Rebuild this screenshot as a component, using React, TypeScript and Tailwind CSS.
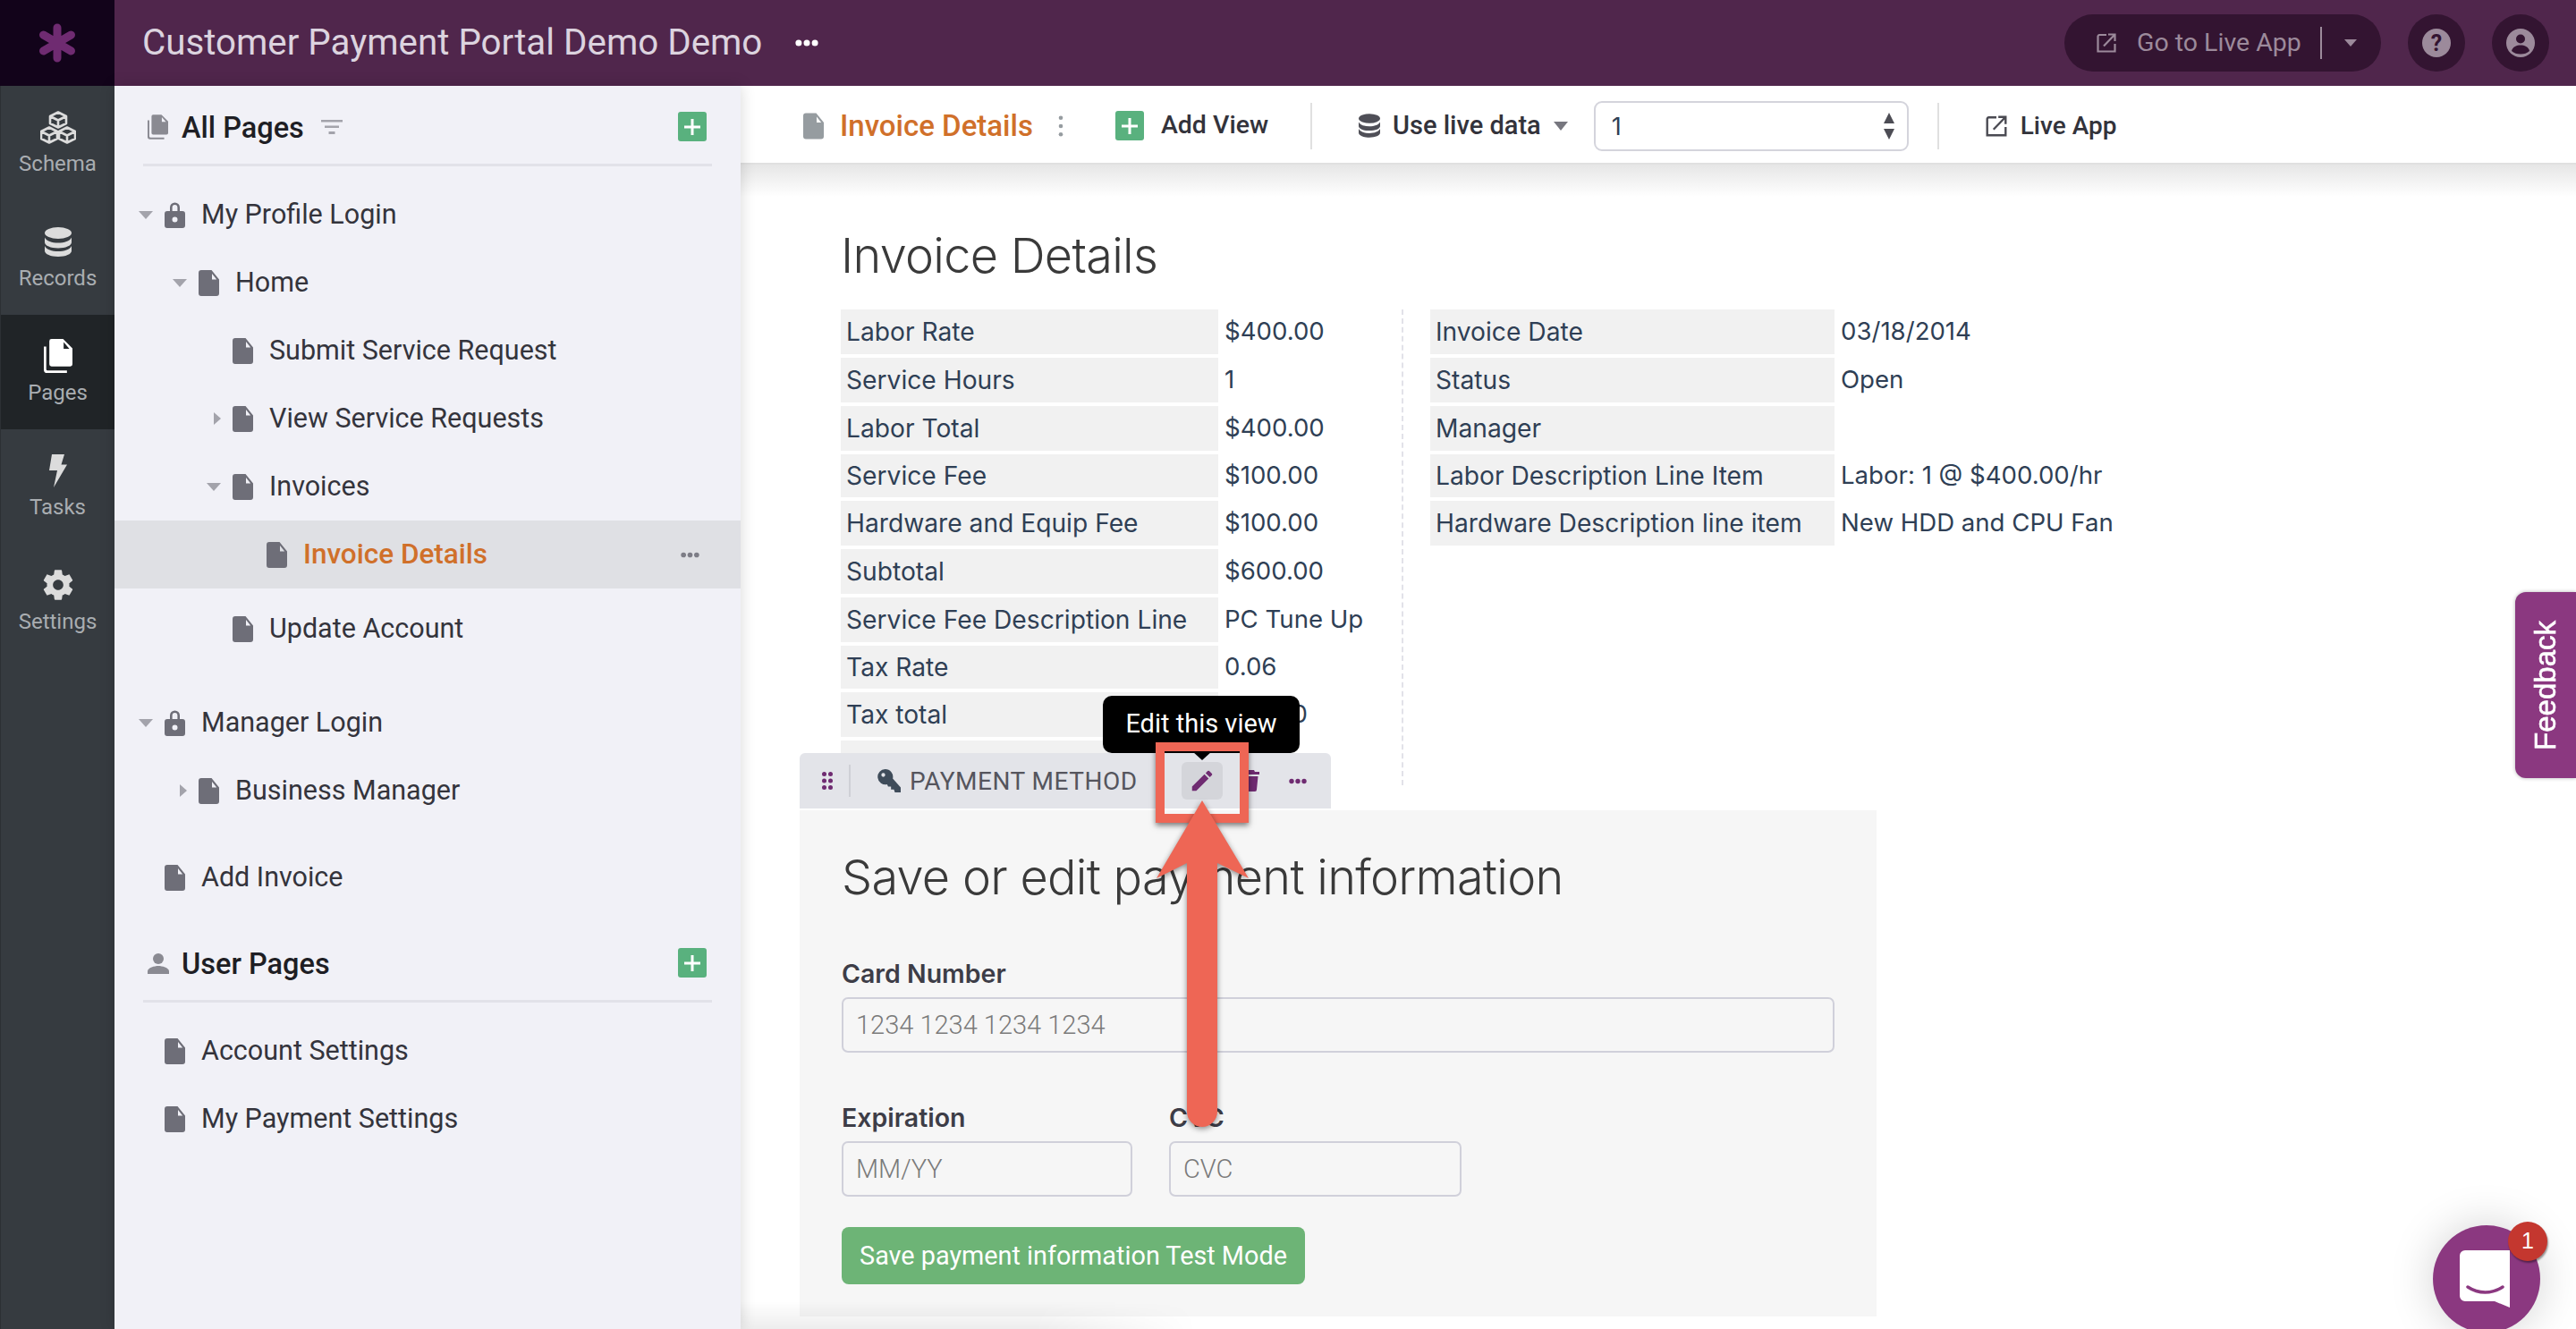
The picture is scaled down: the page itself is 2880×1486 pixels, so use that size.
import React from 'react';

const plex = "font-['Roboto',sans-serif]";
const inter = "font-['Inter',sans-serif]";

function PageIcon({ className = 'w-[23px] h-[29px] text-[#6e6e78]' }: { className?: string }) {
  return (
    <svg viewBox="0 0 23 29" className={`shrink-0 ${className}`} fill="currentColor">
      <path
        fillRule="evenodd"
        d="M3 0h11.5L23 10.5V26a3 3 0 0 1-3 3H3a3 3 0 0 1-3-3V3a3 3 0 0 1 3-3zM15 4v6.5h5.2z"
      />
    </svg>
  );
}

function PagesIcon({ className, color }: { className: string; color: string }) {
  return (
    <svg viewBox="0 0 26 31" className={`shrink-0 ${className}`} fill={color}>
      <path
        fillRule="evenodd"
        d="M7 0h10.5L26 8.5V23a2 2 0 0 1-2 2H7a2 2 0 0 1-2-2V2a2 2 0 0 1 2-2zM18 3v6h5.2z"
      />
      <path d="M0 7h2.2v20.5a1.3 1.3 0 0 0 1.3 1.3H21V31H3a3 3 0 0 1-3-3z" />
    </svg>
  );
}

function LockIcon() {
  return (
    <svg viewBox="0 0 23 30" className="w-[23px] h-[30px] shrink-0" fill="#6e6e78">
      <path
        fillRule="evenodd"
        d="M6 11V7a5.5 5.5 0 0 1 11 0v4h3a3 3 0 0 1 3 3v13a3 3 0 0 1-3 3H3a3 3 0 0 1-3-3V14a3 3 0 0 1 3-3zm2.6 0h5.8V7a2.9 2.9 0 0 0-5.800 0zM11.500 17.500a3 3 0 1 0 0 6 3 3 0 0 0 0-6z"
      />
    </svg>
  );
}

function Caret({ dir }: { dir: 'down' | 'right' | 'none' }) {
  if (dir === 'none') return <span className="w-4 shrink-0" />;
  if (dir === 'down')
    return (
      <svg viewBox="0 0 16 9" className="w-4 h-[9px] shrink-0" fill="#a3a3ab">
        <path d="M0 0h16L8 9z" />
      </svg>
    );
  return (
    <svg viewBox="0 0 16 14" className="w-4 h-[14px] shrink-0" fill="#a3a3ab">
      <path d="M8 0l8 7-8 7z" />
    </svg>
  );
}

function Dots({ className, color }: { className: string; color: string }) {
  return (
    <svg viewBox="0 0 20 6" className={className} fill={color}>
      <circle cx="3" cy="3" r="2.700" />
      <circle cx="10" cy="3" r="2.700" />
      <circle cx="17" cy="3" r="2.700" />
    </svg>
  );
}

function PlusButton() {
  return (
    <div className="w-8 h-[33px] rounded-[3px] bg-[#59b17e] flex items-center justify-center shrink-0">
      <svg viewBox="0 0 18 18" className="w-[18px] h-[18px]" fill="#fff">
        <path d="M7.500 0h3v7.500H18v3h-7.500V18h-3v-7.500H0v-3h7.500z" />
      </svg>
    </div>
  );
}

function SchemaIcon() {
  return (
    <svg viewBox="0 0 40 37" className="w-10 h-[37px]" fill="none" stroke="#dcdcdc" strokeWidth="2.600" strokeLinejoin="round">
      <path d="M20 1.500l9 4.500v8l-9 4.500-9-4.500V6zM11 6l9 4.500L29 6M20 10.500v8" />
      <path d="M10 18.500l9 4.500v8l-9 4.500L1 31v-8zM1 23l9 4.500 9-4.500M10 27.500v8" />
      <path d="M30 18.500l9 4.500v8l-9 4.500-9-4.500v-8zM21 23l9 4.500 9-4.500M30 27.500v8" />
    </svg>
  );
}

function DbIcon({ className, color }: { className: string; color: string }) {
  return (
    <svg viewBox="0 0 30 33" className={className} fill={color}>
      <ellipse cx="15" cy="6.500" rx="15" ry="6.500" />
      <path d="M0 11.500c2 4 8 6 15 6s13-2 15-6V17c0 3.600-6.700 6.500-15 6.500S0 20.600 0 17z" />
      <path d="M0 21c2 4 8 6 15 6s13-2 15-6v5.500c0 3.600-6.700 6.500-15 6.500S0 30.100 0 26.500z" />
    </svg>
  );
}

function TaskIcon() {
  return (
    <svg viewBox="0 0 20 37" className="w-5 h-[37px]" fill="#dcdcdc">
      <path d="M3 0h14l-3.500 11.500H20L5 37l4-19H0z" />
    </svg>
  );
}

function GearIcon() {
  return (
    <svg viewBox="0 0 24 24" className="w-10 h-10" fill="#dcdcdc">
      <path d="M19.430 12.980c.040-.320.070-.640.070-.980s-.030-.660-.070-.980l2.110-1.650c.190-.150.240-.420.120-.640l-2-3.460c-.120-.220-.390-.300-.610-.220l-2.490 1c-.520-.400-1.080-.730-1.690-.980l-.380-2.650A.488.488 0 0 0 14 2h-4c-.250 0-.460.180-.490.420l-.380 2.650c-.610.250-1.170.590-1.690.980l-2.490-1c-.230-.090-.490 0-.610.220l-2 3.460c-.130.220-.070.490.120.640l2.110 1.650c-.040.320-.070.650-.070.980s.030.660.070.980l-2.110 1.650c-.190.150-.240.420-.120.640l2 3.460c.120.220.390.300.610.220l2.490-1c.520.400 1.080.730 1.690.980l.380 2.650c.030.240.240.420.490.420h4c.250 0 .460-.180.490-.420l.380-2.650c.610-.250 1.170-.590 1.690-.980l2.490 1c.230.090.490 0 .610-.220l2-3.460c.120-.220.070-.490-.120-.640l-2.110-1.650zM12 15.500c-1.930 0-3.500-1.570-3.500-3.500s1.570-3.500 3.500-3.500 3.500 1.570 3.500 3.500-1.570 3.500-3.500 3.500z" />
    </svg>
  );
}

function ExternalIcon({ color, className }: { color: string; className: string }) {
  return (
    <svg viewBox="0 0 24 24" className={className} fill="none" stroke={color} strokeWidth="2.200">
      <path d="M12 3H4a2 2 0 0 0-1.500 1.500V21.500H21.500V13" />
      <path d="M9 15.500L21.500 2.500M14 2.500h7.500V10" />
    </svg>
  );
}

function RailItem({ label, active, icon }: { label: string; active?: boolean; icon: React.ReactNode }) {
  return (
    <div className={`h-32 flex flex-col items-center ${active ? 'bg-[#202427]' : ''}`}>
      <div className="h-[72px] pt-5 flex items-center justify-center">{icon}</div>
      <div className={`${plex} text-[24px] leading-[30px] text-[#a9adb1]`}>{label}</div>
    </div>
  );
}

function TreeRow({
  level,
  caret,
  label,
  lock,
  selected,
}: {
  level: number;
  caret: 'down' | 'right' | 'none';
  label: string;
  lock?: boolean;
  selected?: boolean;
}) {
  const pad = ['pl-[27px]', 'pl-[65px]', 'pl-[103px]', 'pl-[141px]'][level];
  return (
    <div className={`h-[76px] flex items-center ${pad} ${selected ? 'bg-[#dfe0e4]' : ''}`}>
      <Caret dir={caret} />
      <span className="w-[13px] shrink-0" />
      {lock ? <LockIcon /> : <PageIcon />}
      <span className={`ml-[18px] ${selected ? 'text-[31.5px] text-[#d0702a] font-medium' : 'text-[30.5px] text-[#34343c]'}`}>{label}</span>
      {selected && (
        <span className="ml-auto mr-[46px]">
          <Dots className="w-[21px] h-[7px]" color="#7d7d86" />
        </span>
      )}
    </div>
  );
}

function SectionHead({ icon, label }: { icon: React.ReactNode; label: string }) {
  return (
    <div className="mx-8 h-[66px] flex items-center border-b-[3px] border-[#e2e2e9] pb-5">
      <span className="w-[43px] pl-[5px] shrink-0 flex">{icon}</span>
      <span className="pt-[3px] text-[32.5px] font-medium text-[#1e1e24]">{label}</span>
      {label === 'All Pages' && (
        <svg viewBox="0 0 24 16" className="w-6 h-4 ml-[19px]" fill="#a3a3ab">
          <path d="M0 0h24v2.500H0zM4 6.500h16V9H4zM8.500 13h7v3h-7z" />
        </svg>
      )}
      <span className="ml-auto mr-[6px]">
        <PlusButton />
      </span>
    </div>
  );
}

const leftRows: { label: string; value: string; short?: boolean }[] = [
  { label: 'Labor Rate', value: '$400.00' },
  { label: 'Service Hours', value: '1' },
  { label: 'Labor Total', value: '$400.00' },
  { label: 'Service Fee', value: '$100.00', short: true },
  { label: 'Hardware and Equip Fee', value: '$100.00' },
  { label: 'Subtotal', value: '$600.00' },
  { label: 'Service Fee Description Line', value: 'PC Tune Up' },
  { label: 'Tax Rate', value: '0.06', short: true },
  { label: 'Tax total', value: '$36.00' },
  { label: '', value: '' },
];

const rightRows: { label: string; value: string; short?: boolean }[] = [
  { label: 'Invoice Date', value: '03/18/2014' },
  { label: 'Status', value: 'Open' },
  { label: 'Manager', value: '' },
  { label: 'Labor Description Line Item', value: 'Labor: 1 @ $400.00/hr', short: true },
  { label: 'Hardware Description line item', value: 'New HDD and CPU Fan' },
];

function DetailTable({ rows, labelW }: { rows: typeof leftRows; labelW: string }) {
  return (
    <div className="flex flex-col gap-1">
      {rows.map((r, i) => (
        <div key={i} className={`flex items-center ${r.short ? 'h-12' : 'h-[50px]'}`}>
          <div className={`${labelW} h-full bg-[#f1f1f1] pl-[6px] flex items-center shrink-0 text-[28.2px]`}>{r.label}</div>
          <div className="pl-[7px] whitespace-nowrap text-[27.6px]">{r.value}</div>
        </div>
      ))}
    </div>
  );
}

function Field({ label, placeholder, className }: { label: string; placeholder: string; className: string }) {
  return (
    <div className={className}>
      <div className="text-[28.5px] leading-[34px] font-semibold text-[#3d3d47]">{label}</div>
      <div className="mt-[9px] h-[62px] rounded-[7px] border-2 border-[#d0d0da] pl-[14px] pt-[2px] flex items-center font-['Roboto',sans-serif] font-light text-[29px] text-[#7a7a7a]">
        {placeholder}
      </div>
    </div>
  );
}

export default function App() {
  return (
    <div className={`${plex} relative w-[2880px] h-[1486px] overflow-hidden bg-white`}>
      <div className="h-24 flex bg-[#50264c]">
        <div className="w-32 bg-[#12031a] flex items-center justify-center">
          <svg viewBox="0 0 44 44" className="w-[44px] h-[44px]" fill="none" stroke="#6f2b71" strokeWidth="9" strokeLinecap="round">
            <path d="M22 22V5M22 22v17M22 22L6.500 13M22 22l15.500-9M22 22L6.500 31M22 22l15.500 9" />
          </svg>
        </div>
        <div className="flex-1 flex items-center pl-[31px] pr-[30px]">
          <span className="text-[40.300px] text-[#dcd3df]">Customer Payment Portal Demo Demo</span>
          <Dots className="w-[26px] h-[8px] ml-[37px]" color="#ffffff" />
          <div className="ml-auto flex items-center gap-[30px]">
            <div className="w-[354px] h-16 rounded-full bg-[#331431] flex items-center pl-[35px] text-[#9c8a9b]">
              <ExternalIcon color="#9c8a9b" className="w-[24px] h-[24px]" />
              <span className="ml-[22px] text-[28.5px] w-[187px] whitespace-nowrap">Go to Live App</span>
              <span className="ml-[18px] w-[2px] h-9 bg-[#9c8a9b]" />
              <svg viewBox="0 0 14 8" className="ml-[25px] w-[14px] h-[8px]" fill="#9c8a9b">
                <path d="M0 0h14L7 8z" />
              </svg>
            </div>
            <div className="w-16 h-16 rounded-full bg-[#331431] flex items-center justify-center">
              <svg viewBox="0 0 32 32" className="w-8 h-8">
                <circle cx="16" cy="16" r="16" fill="#9c8a9b" />
                <text x="16" y="25" textAnchor="middle" fontSize="25" fontWeight="700" fontFamily="Roboto, sans-serif" fill="#331431">?</text>
              </svg>
            </div>
            <div className="w-16 h-16 rounded-full bg-[#331431] flex items-center justify-center">
              <svg viewBox="0 0 32 32" className="w-8 h-8">
                <circle cx="16" cy="16" r="16" fill="#9c8a9b" />
                <circle cx="16" cy="11.500" r="5" fill="#331431" />
                <path d="M6 25c1-5 6-6.500 10-6.500s9 1.500 10 6.500c-2.500 2.500-6 3.500-10 3.500S8.500 27.500 6 25z" fill="#331431" />
              </svg>
            </div>
          </div>
        </div>
      </div>

      <div className="flex h-[1390px]">
        <nav className="w-32 shrink-0 bg-[#363b40] border-l border-[#2c3034]">
          <RailItem label="Schema" icon={<SchemaIcon />} />
          <RailItem label="Records" icon={<DbIcon className="w-[30px] h-[33px]" color="#dcdcdc" />} />
          <RailItem label="Pages" active icon={<PagesIcon className="w-[32px] h-[40px]" color="#ffffff" />} />
          <RailItem label="Tasks" icon={<TaskIcon />} />
          <RailItem label="Settings" icon={<GearIcon />} />
        </nav>

        <aside className="w-[700px] shrink-0 bg-[#f1f1f7] pt-6 relative z-10 shadow-[0_0_16px_rgba(0,0,0,0.16)]">
          <SectionHead icon={<PagesIcon className="w-[23px] h-[28px]" color="#8a8a92" />} label="All Pages" />
          <div className="pt-4">
            <TreeRow level={0} caret="down" lock label="My Profile Login" />
            <TreeRow level={1} caret="down" label="Home" />
            <TreeRow level={2} caret="none" label="Submit Service Request" />
            <TreeRow level={2} caret="right" label="View Service Requests" />
            <TreeRow level={2} caret="down" label="Invoices" />
            <TreeRow level={3} caret="none" label="Invoice Details" selected />
            <div className="mt-[7px]">
              <TreeRow level={2} caret="none" label="Update Account" />
            </div>
            <div className="mt-[29px]">
              <TreeRow level={0} caret="down" lock label="Manager Login" />
              <TreeRow level={1} caret="right" label="Business Manager" />
            </div>
            <div className="mt-[21px]">
              <TreeRow level={0} caret="none" label="Add Invoice" />
            </div>
          </div>
          <div className="mt-9">
            <SectionHead
              icon={
                <svg viewBox="0 0 24 24" className="w-[24px] h-[24px]" fill="#8a8a92">
                  <circle cx="12" cy="7" r="6" />
                  <path d="M0 24v-3c0-4 8-6 12-6s12 2 12 6v3z" />
                </svg>
              }
              label="User Pages"
            />
          </div>
          <div className="pt-4">
            <TreeRow level={0} caret="none" label="Account Settings" />
            <TreeRow level={0} caret="none" label="My Payment Settings" />
          </div>
        </aside>

        <main className="flex-1 flex flex-col min-w-0">
          <div className="h-[88px] shrink-0 flex items-center border-b-[2px] border-[#e0e0e0] pl-[70px] pt-[3px] relative">
            <PageIcon className="w-[23px] h-[30px] text-[#969ca0]" />
            <span className="ml-[18px] text-[33px] font-medium text-[#d0702a]">Invoice Details</span>
            <svg viewBox="0 0 6 26" className="ml-[28px] w-[6px] h-[24px]" fill="#969ca0">
              <circle cx="3" cy="3" r="2.500" />
              <circle cx="3" cy="13" r="2.500" />
              <circle cx="3" cy="23" r="2.500" />
            </svg>
            <span className="ml-[58px]">
              <PlusButton />
            </span>
            <span className="ml-[19px] text-[28.5px] font-medium text-[#33333b]">Add View</span>
            <span className="ml-[47px] w-[2px] h-[52px] bg-[#e0e0e0]" />
            <span className="ml-[52px]">
              <DbIcon className="w-[24px] h-[27px]" color="#4f4f57" />
            </span>
            <span className="ml-[14px] text-[29px] font-medium text-[#33333b]">Use live data</span>
            <svg viewBox="0 0 16 10" className="ml-[14px] w-4 h-[10px]" fill="#77777f">
              <path d="M0 0h16L8 10z" />
            </svg>
            <div className={`${inter} ml-[29px] w-[352px] h-14 rounded-[9px] border-2 border-[#d4d4dc] pl-[18px] pr-[14px] flex items-center justify-between text-[27px] text-[#2f3f55]`}>
              <span className="pt-[3px]">1</span>
              <svg viewBox="0 0 12 30" className="w-3 h-[30px]" fill="#4d4d55">
                <path d="M6 0l6 12H0zM6 30L0 18h12z" />
              </svg>
            </div>
            <span className="ml-[32px] w-[2px] h-[52px] bg-[#e0e0e0]" />
            <span className="ml-[51px]">
              <ExternalIcon color="#4a4a52" className="w-[26px] h-[26px]" />
            </span>
            <span className="ml-[14px] text-[28px] font-medium text-[#33333b]">Live App</span>
          </div>

          <div className="relative flex-1 bg-gradient-to-b from-[#e6e6e6] to-white to-[36px] pl-[66px]">
            <div className={`${inter} text-[#2f3f55] text-[28px]`}>
              <div className="pl-[46px] pt-[71px]">
                <h1 className="text-[54px] leading-[62px] tracking-[-0.7px] text-[#3a3a3a] font-light">Invoice Details</h1>
                <div className="mt-[29px] flex">
                  <div className="w-[627px]">
                    <DetailTable rows={leftRows} labelW="w-[422px]" />
                  </div>
                  <div className="border-l-2 border-dashed border-[#e2e2e9] pl-[30px] w-[600px]">
                    <DetailTable rows={rightRows} labelW="w-[452px]" />
                  </div>
                </div>
              </div>

              <div className="relative -mt-[36px] w-[594px] h-[62px] rounded-t-[6px] bg-[#e3e4e9] flex items-center">
                <svg viewBox="0 0 12 20" className="ml-[25px] w-[12px] h-[20px]" fill="#6f2b71">
                  <circle cx="2.500" cy="2.500" r="2.500" />
                  <circle cx="9.500" cy="2.500" r="2.500" />
                  <circle cx="2.500" cy="10" r="2.500" />
                  <circle cx="9.500" cy="10" r="2.500" />
                  <circle cx="2.500" cy="17.500" r="2.500" />
                  <circle cx="9.500" cy="17.500" r="2.500" />
                </svg>
                <span className="ml-[18px] w-[2px] h-9 bg-[#cfd0d6]" />
                <svg viewBox="0 0 24 24" className="ml-[30px] w-[26px] h-[26px]" fill="#3f4c5a">
                  <path
                    fillRule="evenodd"
                    d="M8 0a8 8 0 0 1 7.800 9.800L24 19v5h-6l-1-3h-3v-3h-3l-1-2.200A8 8 0 1 1 8 0zM6 4a2 2 0 1 0 0 4 2 2 0 0 0 0-4z"
                  />
                </svg>
                <span className={`${plex} ml-[10px] pt-[2px] w-[250px] text-[28px] text-[#55555d] tracking-[0.5px] whitespace-nowrap`}>PAYMENT METHOD</span>
                <div className="relative ml-[54px] w-[46px] h-[42px] rounded-[6px] bg-[#d4d5da] flex items-center justify-center">
                  <svg viewBox="0 0 24 24" className="w-[30px] h-[30px]" fill="#6f2b71">
                    <path d="M3 17.250V21h3.750L17.810 9.940l-3.750-3.750L3 17.250zM20.710 7.040a1 1 0 0 0 0-1.410l-2.340-2.340a1 1 0 0 0-1.410 0l-1.830 1.830 3.750 3.750 1.830-1.830z" />
                  </svg>
                  <div className={`${plex} absolute left-[-88px] top-[-74px] w-[220px] h-16 rounded-[10px] bg-black flex items-center justify-center text-[29px] text-white`}>
                    Edit this view
                    <span className="absolute left-[100px] top-[62px] border-x-[11px] border-x-transparent border-t-[10px] border-t-black" />
                  </div>
                </div>
                <svg viewBox="0 0 18 24" className="ml-[23px] w-[18px] h-[24px]" fill="#6f2b71">
                  <path d="M6 0h6l1 2h5v3H0V2h5zM1.500 7h15L15 22a2 2 0 0 1-2 2H5a2 2 0 0 1-2-2z" />
                </svg>
                <Dots className="ml-[33px] w-[20px] h-[7px]" color="#6f2b71" />
              </div>

              <div className="mt-[2px] w-[1204px] h-[566px] bg-[#f6f6f6] px-[47px] pt-[44px]">
                <h2 className="text-[54px] leading-[62px] tracking-[-0.7px] text-[#3a3a3a] font-light">Save or edit payment information</h2>
                <Field label="Card Number" placeholder="1234 1234 1234 1234" className="mt-[60px] w-[1110px]" />
                <div className="mt-[56px] flex gap-[41px]">
                  <Field label="Expiration" placeholder="MM/YY" className="w-[325px]" />
                  <Field label="CVC" placeholder="CVC" className="w-[327px]" />
                </div>
                <div className="mt-[34px] w-[518px] h-16 pt-[2px] rounded-[8px] bg-[#6db476] flex items-center justify-center font-['Roboto',sans-serif] text-[28.800px] text-white">
                  Save payment information Test Mode
                </div>
              </div>
            </div>
          </div>
        </main>
      </div>

      {/* annotation over the screenshot */}
      <div className="absolute left-[1292px] top-[830px] w-[104px] h-[90px] border-[10px] border-[#ee6655] shadow-[0_3px_6px_rgba(0,0,0,0.5)]" />
      <svg
        viewBox="0 0 123 375"
        className="absolute left-[1283px] top-[890px] w-[123px] h-[375px] drop-shadow-[0_2px_3px_rgba(0,0,0,0.45)]"
        fill="#ee6655"
      >
        <path d="M61 5l52 87-35-17v278a17 17 0 0 1-34 0V75L10 92z" />
      </svg>

      <div className="absolute left-[2812px] top-[662px] w-[68px] h-[208px] rounded-l-[12px] bg-[#8b3880] shadow-[0_0_4px_rgba(0,0,0,0.3)] flex items-center justify-center">
        <span className="[writing-mode:vertical-rl] rotate-180 font-['Liberation_Sans',sans-serif] [-webkit-text-stroke:0.6px_white] text-[33px] text-white">Feedback</span>
      </div>

      <div className="absolute left-[2720px] top-[1370px] w-[120px] h-[120px] rounded-full bg-[#8b3880] shadow-[0_0_50px_rgba(0,0,0,0.18)] flex items-start justify-center pt-[28px]">
        <svg viewBox="0 0 56 64" className="w-[56px] h-[64px] ml-[-5px]">
          <path d="M6 0h50v64L39 57H6a6 6 0 0 1-6-6V6a6 6 0 0 1 6-6z" fill="#fff" />
          <path d="M9 41c12 8 27 8 39 0" fill="none" stroke="#8b3880" strokeWidth="3.500" strokeLinecap="round" />
        </svg>
      </div>
      <div className="absolute left-[2804px] top-[1366px] w-[44px] h-[44px] rounded-full bg-[#c4372f] shadow-[1px_2px_2px_rgba(0,0,0,0.4)] flex items-center justify-center text-[25px] text-white font-['Liberation_Sans',sans-serif]">
        1
      </div>
      {/* soft fade along the bottom edge, gone by the middle of the form */}
      <div className="absolute left-[128px] top-[1455px] w-[1210px] h-[31px] bg-gradient-to-b from-transparent to-[rgba(0,0,0,0.07)] [mask-image:linear-gradient(to_right,black_85%,transparent)]" />
    </div>
  );
}
